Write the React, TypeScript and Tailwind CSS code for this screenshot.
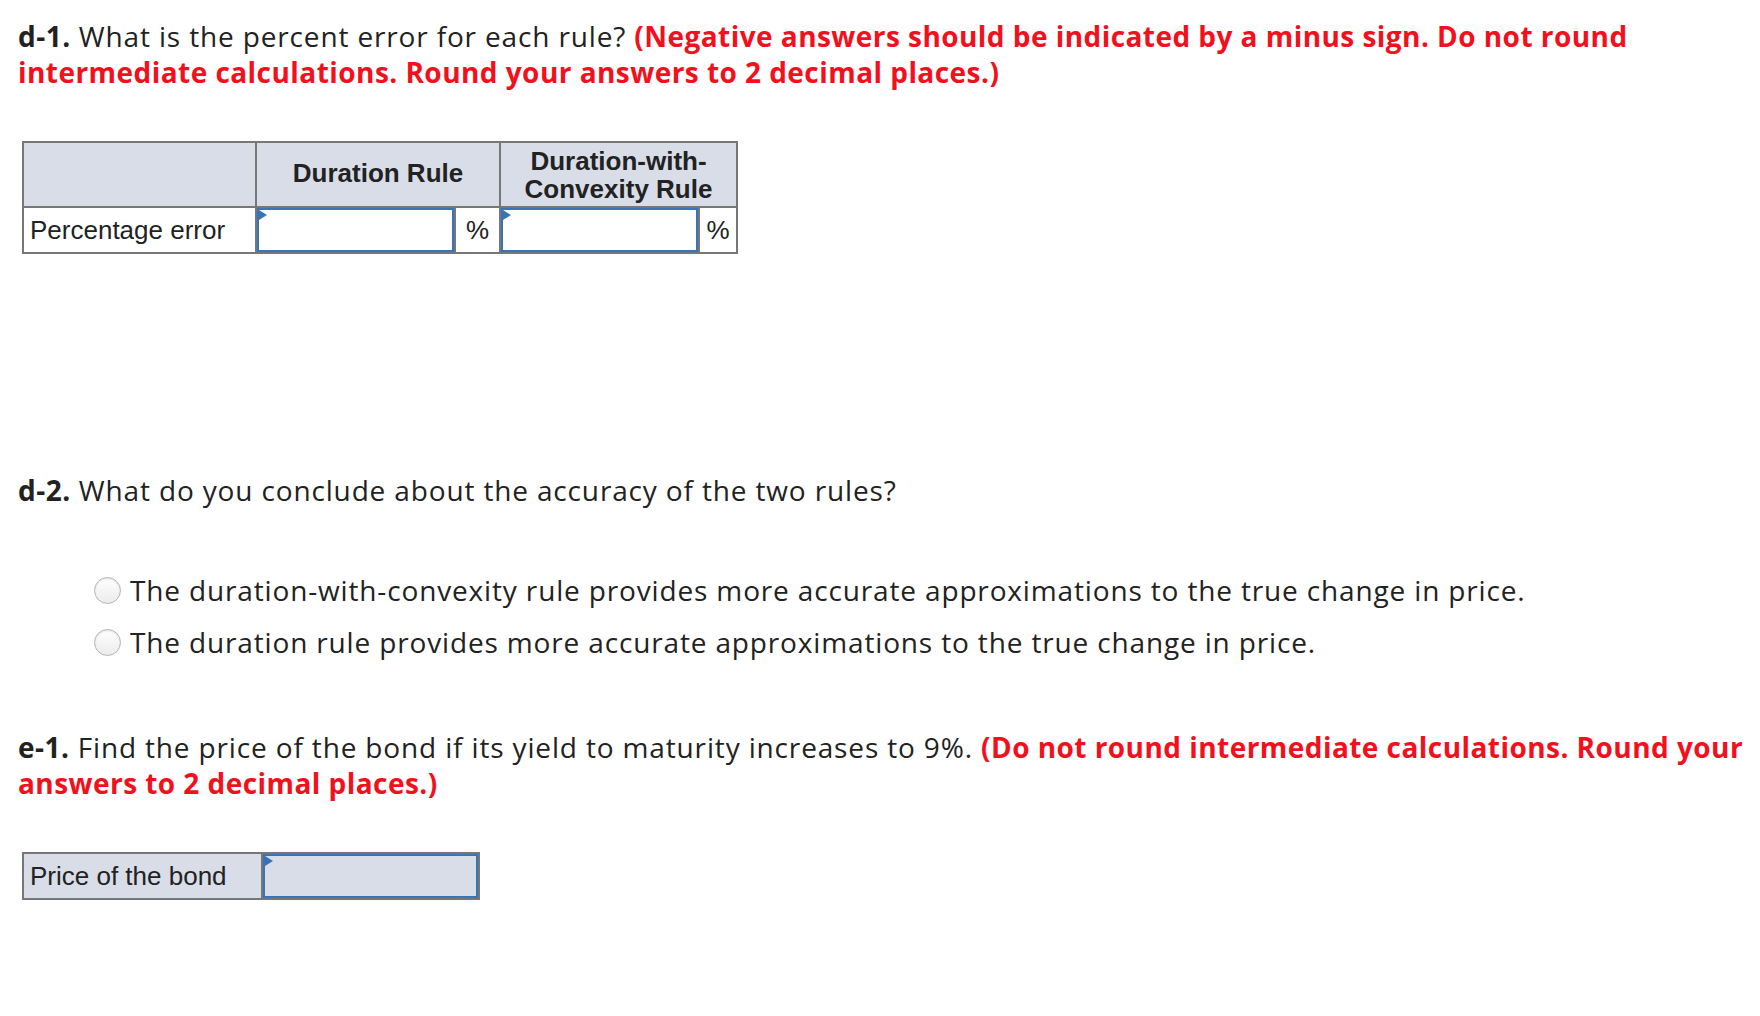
import React from "react"

const heading = "font-['Open_Sans',sans-serif] text-[28px] leading-[36px] tracking-[0.85px] text-[#222]"
const red = "font-bold tracking-[0.45px] text-[#f2101c]"

function Marker() {
  return (
    <span className="absolute left-0 top-0 w-0 h-0 border-t-[5px] border-b-[5px] border-l-[8px] border-t-transparent border-b-transparent border-l-[#3a74b8]" />
  )
}

function AnswerBox({ bg = "bg-white" }: { bg?: string }) {
  return (
    <div className={`relative h-full w-full border-2 border-[#3a74b8] ${bg}`}>
      <Marker />
    </div>
  )
}

function Radio({ label }: { label: string }) {
  return (
    <label className="flex items-center gap-[9px] h-[52px]">
      <span className="w-[27px] h-[27px] rounded-full border border-[#b5b5b5] bg-gradient-to-b from-white to-[#ececec] shadow-[inset_0_1px_2px_rgba(0,0,0,0.12)]" />
      <span className="font-['Open_Sans',sans-serif] text-[28px] tracking-[0.85px] text-[#222]">{label}</span>
    </label>
  )
}

export default function App() {
  return (
    <div className="min-h-screen bg-white pl-[18px] pr-[8px] pt-[18px] font-['Liberation_Sans',Arial,sans-serif]">
      {/* d-1 */}
      <p className={heading}>
        <b className="tracking-[0.5px]">d-1.</b> What is the percent error for each rule?{" "}
        <span className={red}>
          (Negative answers should be indicated by a minus sign. Do not round intermediate calculations. Round your answers to 2 decimal places.)
        </span>
      </p>

      <table className="mt-[51px] ml-[4px] border-collapse text-[26px] text-[#222] font-['Liberation_Sans',Arial,sans-serif]">
        <thead>
          <tr className="h-[65px] bg-[#d8dde8]">
            <th className="w-[233px] border-2 border-[#777]"></th>
            <th colSpan={2} className="w-[244px] border-2 border-[#777] font-bold leading-[28px] pb-[3px]">Duration Rule</th>
            <th colSpan={2} className="w-[237px] border-2 border-[#777] font-bold leading-[28px]">
              Duration-with-
              <br />
              Convexity Rule
            </th>
          </tr>
        </thead>
        <tbody>
          <tr className="h-[46px]">
            <td className="border-2 border-[#777] px-[6px] text-left">Percentage error</td>
            <td className="w-[199px] border-2 border-[#777] p-0 h-[46px]">
              <AnswerBox />
            </td>
            <td className="w-[45px] border-2 border-[#777] text-center">%</td>
            <td className="w-[199px] border-2 border-[#777] p-0 h-[46px]">
              <AnswerBox />
            </td>
            <td className="w-[38px] border-2 border-[#777] text-center">%</td>
          </tr>
        </tbody>
      </table>

      {/* d-2 */}
      <p className={`${heading} mt-[218px]`}>
        <b className="tracking-[0.5px]">d-2.</b> What do you conclude about the accuracy of the two rules?
      </p>

      <div className="mt-[56px] pl-[76px] flex flex-col">
        <Radio label="The duration-with-convexity rule provides more accurate approximations to the true change in price." />
        <Radio label="The duration rule provides more accurate approximations to the true change in price." />
      </div>

      {/* e-1 */}
      <p className={`${heading} mt-[61px]`}>
        <b className="tracking-[0.5px]">e-1.</b> Find the price of the bond if its yield to maturity increases to 9%.{" "}
        <span className={red}>(Do not round intermediate calculations. Round your answers to 2 decimal places.)</span>
      </p>

      <table className="mt-[51px] ml-[4px] border-collapse text-[26px] text-[#222]">
        <tbody>
          <tr className="h-[46px] bg-[#d8dde8]">
            <td className="w-[239px] border-2 border-[#777] px-[6px]">Price of the bond</td>
            <td className="w-[217px] border-2 border-[#777] p-0 h-[46px]">
              <AnswerBox bg="bg-[#d8dde8]" />
            </td>
          </tr>
        </tbody>
      </table>
    </div>
  )
}
